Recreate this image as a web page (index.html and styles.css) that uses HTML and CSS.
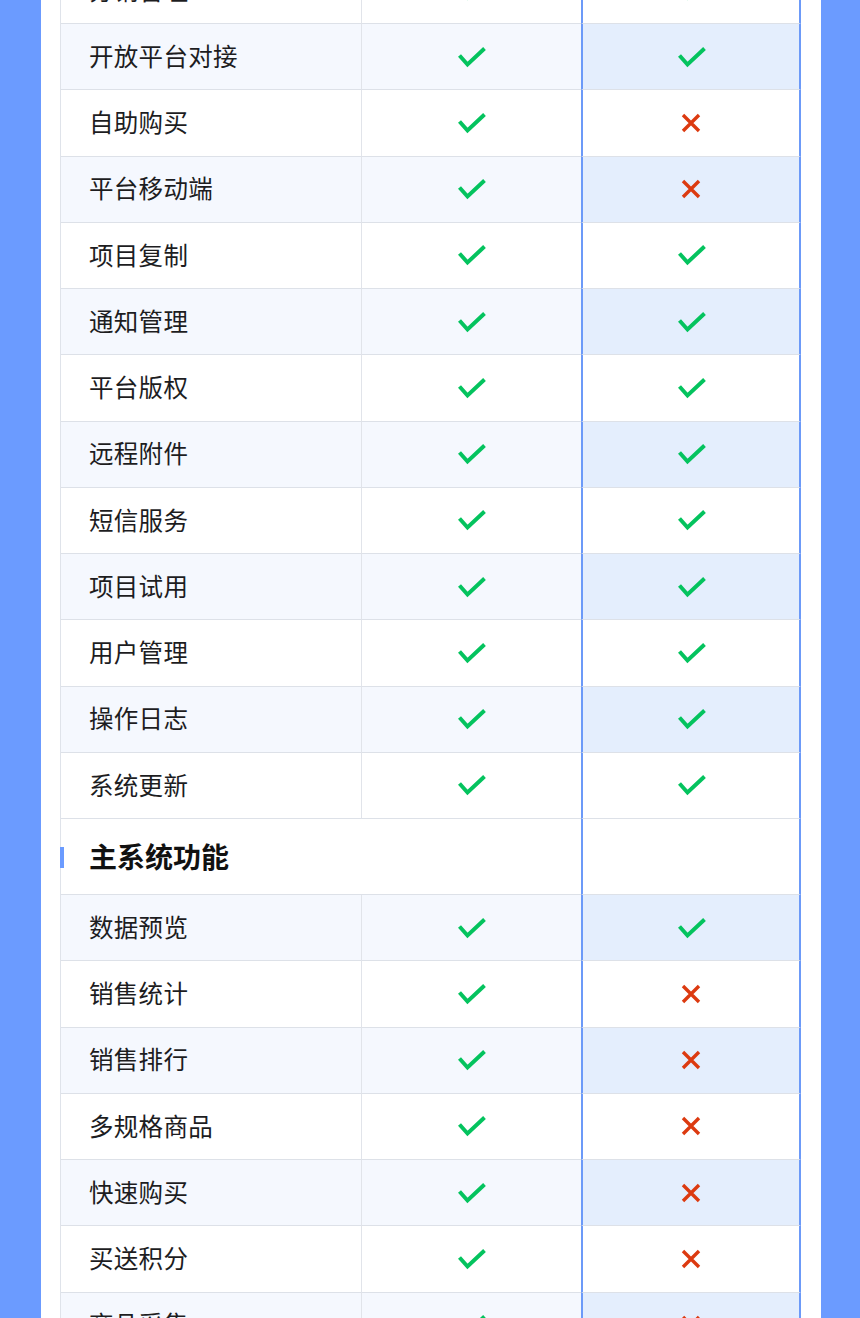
FILE: index.html
```html
<!DOCTYPE html>
<html lang="zh-CN">
<head>
<meta charset="utf-8">
<title>功能对比</title>
<link rel="stylesheet" href="styles.css">
</head>
<body>
<svg width="0" height="0" class="defs">
  <defs>
    <symbol id="ok" viewBox="0 0 28 22"><polyline points="1.5,9.5 9.5,18.5 26.5,2.5" fill="none" stroke="#04c35e" stroke-width="4"/></symbol>
    <symbol id="no" viewBox="0 0 20 20"><path d="M2 2 L18 18 M18 2 L2 18" fill="none" stroke="#dc3a10" stroke-width="3.4"/></symbol>
  </defs>
</svg>
<div class="page">
  <div class="card">
    <div class="table">
      <div class="row"><div class="name">分销管理</div><div class="cell"><svg class="ok"><use href="#ok"/></svg></div><div class="cell hl"><svg class="ok"><use href="#ok"/></svg></div></div>
      <div class="row alt"><div class="name">开放平台对接</div><div class="cell"><svg class="ok"><use href="#ok"/></svg></div><div class="cell hl"><svg class="ok"><use href="#ok"/></svg></div></div>
      <div class="row"><div class="name">自助购买</div><div class="cell"><svg class="ok"><use href="#ok"/></svg></div><div class="cell hl"><svg class="no"><use href="#no"/></svg></div></div>
      <div class="row alt"><div class="name">平台移动端</div><div class="cell"><svg class="ok"><use href="#ok"/></svg></div><div class="cell hl"><svg class="no"><use href="#no"/></svg></div></div>
      <div class="row"><div class="name">项目复制</div><div class="cell"><svg class="ok"><use href="#ok"/></svg></div><div class="cell hl"><svg class="ok"><use href="#ok"/></svg></div></div>
      <div class="row alt"><div class="name">通知管理</div><div class="cell"><svg class="ok"><use href="#ok"/></svg></div><div class="cell hl"><svg class="ok"><use href="#ok"/></svg></div></div>
      <div class="row"><div class="name">平台版权</div><div class="cell"><svg class="ok"><use href="#ok"/></svg></div><div class="cell hl"><svg class="ok"><use href="#ok"/></svg></div></div>
      <div class="row alt"><div class="name">远程附件</div><div class="cell"><svg class="ok"><use href="#ok"/></svg></div><div class="cell hl"><svg class="ok"><use href="#ok"/></svg></div></div>
      <div class="row"><div class="name">短信服务</div><div class="cell"><svg class="ok"><use href="#ok"/></svg></div><div class="cell hl"><svg class="ok"><use href="#ok"/></svg></div></div>
      <div class="row alt"><div class="name">项目试用</div><div class="cell"><svg class="ok"><use href="#ok"/></svg></div><div class="cell hl"><svg class="ok"><use href="#ok"/></svg></div></div>
      <div class="row"><div class="name">用户管理</div><div class="cell"><svg class="ok"><use href="#ok"/></svg></div><div class="cell hl"><svg class="ok"><use href="#ok"/></svg></div></div>
      <div class="row alt"><div class="name">操作日志</div><div class="cell"><svg class="ok"><use href="#ok"/></svg></div><div class="cell hl"><svg class="ok"><use href="#ok"/></svg></div></div>
      <div class="row"><div class="name">系统更新</div><div class="cell"><svg class="ok"><use href="#ok"/></svg></div><div class="cell hl"><svg class="ok"><use href="#ok"/></svg></div></div>
      <div class="row section"><div class="title"><span class="marker"></span>主系统功能</div><div class="cell hl"></div></div>
      <div class="row alt"><div class="name">数据预览</div><div class="cell"><svg class="ok"><use href="#ok"/></svg></div><div class="cell hl"><svg class="ok"><use href="#ok"/></svg></div></div>
      <div class="row"><div class="name">销售统计</div><div class="cell"><svg class="ok"><use href="#ok"/></svg></div><div class="cell hl"><svg class="no"><use href="#no"/></svg></div></div>
      <div class="row alt"><div class="name">销售排行</div><div class="cell"><svg class="ok"><use href="#ok"/></svg></div><div class="cell hl"><svg class="no"><use href="#no"/></svg></div></div>
      <div class="row"><div class="name">多规格商品</div><div class="cell"><svg class="ok"><use href="#ok"/></svg></div><div class="cell hl"><svg class="no"><use href="#no"/></svg></div></div>
      <div class="row alt"><div class="name">快速购买</div><div class="cell"><svg class="ok"><use href="#ok"/></svg></div><div class="cell hl"><svg class="no"><use href="#no"/></svg></div></div>
      <div class="row"><div class="name">买送积分</div><div class="cell"><svg class="ok"><use href="#ok"/></svg></div><div class="cell hl"><svg class="no"><use href="#no"/></svg></div></div>
      <div class="row alt"><div class="name">商品采集</div><div class="cell"><svg class="ok"><use href="#ok"/></svg></div><div class="cell hl"><svg class="no"><use href="#no"/></svg></div></div>
    </div>
  </div>
</div>
</body>
</html>
```

FILE: styles.css
```css
html, body {
  margin: 0;
  padding: 0;
  overflow: hidden;
  background: #6b9bff;
  font-family: "Noto Sans CJK SC", "Noto Sans", sans-serif;
  color: #1d1d1f;
}
.defs { position: absolute; width: 0; height: 0; }
.page {
  padding: 0 39px 0 41px;
  height: 1318px;
}
.card {
  display: flow-root;
  background: #ffffff;
  padding: 0 20px 0 19px;
  height: 100%;
}
.table {
  margin-top: -42.25px;
  border-left: 1px solid #dfe3ea;
  display: flex;
  flex-direction: column;
}
.row {
  display: grid;
  grid-template-columns: 300px 220px 220px;
  height: 66.25px;
}
.row > div {
  border-bottom: 1px solid #dde1e8;
  box-sizing: border-box;
  display: flex;
  align-items: center;
}
.row.alt > div { background: #f5f8fe; }
.row.alt > .hl { background: #e4eefd; }
.name {
  padding-left: 28px;
  padding-bottom: 1px;
  font-size: 24.5px;
  line-height: 1;
  letter-spacing: 0.3px;
}
.cell {
  justify-content: center;
  border-left: 1px solid #e1e4ea;
}
.cell.hl {
  border-left: 2px solid #6c9af8;
  border-right: 2px solid #6c9af8;
}
.ok { width: 28px; height: 22px; margin-left: 1px; }
.no { width: 20px; height: 20px; }
.row.section { height: 76px; }
.title {
  grid-column: span 2;
  position: relative;
  padding-left: 28px;
  padding-bottom: 1px;
  font-size: 28px;
  font-weight: 700;
  color: #111;
}
.marker {
  position: absolute;
  left: -1px;
  top: 28px;
  width: 4px;
  height: 21px;
  background: #6b9bff;
}
```
